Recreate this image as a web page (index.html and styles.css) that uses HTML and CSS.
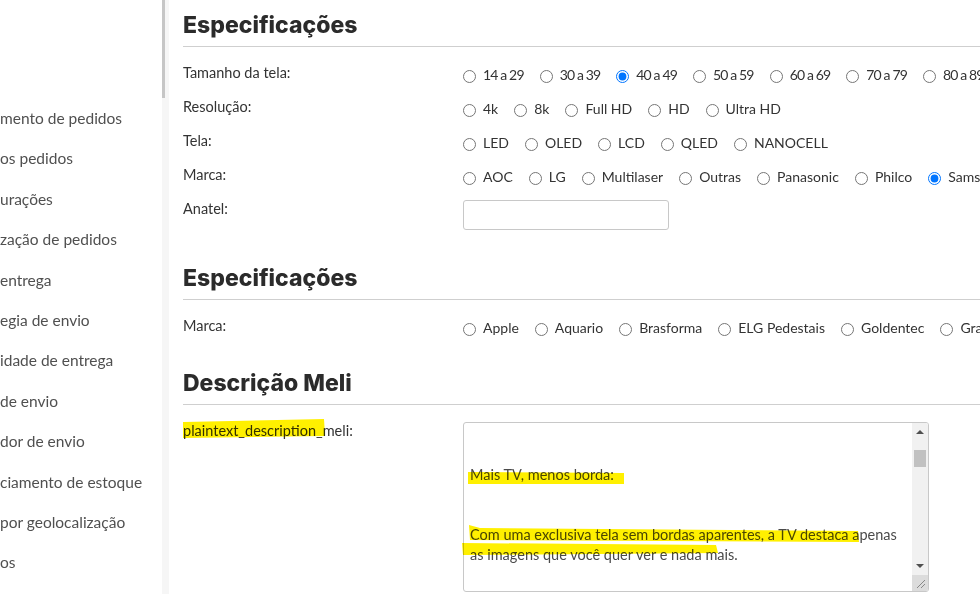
FILE: index.html
```html
<!DOCTYPE html>
<html lang="pt-BR">
<head>
<meta charset="utf-8">
<title>Especificações</title>
<link rel="stylesheet" href="styles.css">
</head>
<body>
<div class="page">
  <aside class="sidebar">
    <ul class="menu">
      <li>mento de pedidos</li>
      <li>os pedidos</li>
      <li>urações</li>
      <li>zação de pedidos</li>
      <li>entrega</li>
      <li>egia de envio</li>
      <li>idade de entrega</li>
      <li>de envio</li>
      <li>dor de envio</li>
      <li>ciamento de estoque</li>
      <li>por geolocalização</li>
      <li>os</li>
    </ul>
  </aside>
  <div class="side-scroll"><div class="side-thumb"></div></div>

  <main class="main">
    <h2 class="section-title">Especificações</h2>
    <div class="row">
      <div class="label">Tamanho da tela:</div>
      <div class="options options-num">
        <label class="opt"><input type="radio" name="t">14 a 29</label>
        <label class="opt"><input type="radio" name="t">30 a 39</label>
        <label class="opt"><input type="radio" name="t" checked>40 a 49</label>
        <label class="opt"><input type="radio" name="t">50 a 59</label>
        <label class="opt"><input type="radio" name="t">60 a 69</label>
        <label class="opt"><input type="radio" name="t">70 a 79</label>
        <label class="opt"><input type="radio" name="t">80 a 89</label>
      </div>
    </div>
    <div class="row">
      <div class="label">Resolução:</div>
      <div class="options">
        <label class="opt"><input type="radio" name="r">4k</label>
        <label class="opt"><input type="radio" name="r">8k</label>
        <label class="opt"><input type="radio" name="r">Full HD</label>
        <label class="opt"><input type="radio" name="r">HD</label>
        <label class="opt"><input type="radio" name="r">Ultra HD</label>
      </div>
    </div>
    <div class="row">
      <div class="label">Tela:</div>
      <div class="options">
        <label class="opt"><input type="radio" name="l">LED</label>
        <label class="opt"><input type="radio" name="l">OLED</label>
        <label class="opt"><input type="radio" name="l">LCD</label>
        <label class="opt"><input type="radio" name="l">QLED</label>
        <label class="opt"><input type="radio" name="l">NANOCELL</label>
      </div>
    </div>
    <div class="row">
      <div class="label">Marca:</div>
      <div class="options">
        <label class="opt"><input type="radio" name="m">AOC</label>
        <label class="opt"><input type="radio" name="m">LG</label>
        <label class="opt"><input type="radio" name="m">Multilaser</label>
        <label class="opt"><input type="radio" name="m">Outras</label>
        <label class="opt"><input type="radio" name="m">Panasonic</label>
        <label class="opt"><input type="radio" name="m">Philco</label>
        <label class="opt"><input type="radio" name="m" checked>Samsung</label>
      </div>
    </div>
    <div class="row row-input">
      <div class="label">Anatel:</div>
      <div class="field"><input class="text-input" type="text"></div>
    </div>

    <h2 class="section-title section-2">Especificações</h2>
    <div class="row">
      <div class="label">Marca:</div>
      <div class="options">
        <label class="opt"><input type="radio" name="m2">Apple</label>
        <label class="opt"><input type="radio" name="m2">Aquario</label>
        <label class="opt"><input type="radio" name="m2">Brasforma</label>
        <label class="opt"><input type="radio" name="m2">ELG Pedestais</label>
        <label class="opt"><input type="radio" name="m2">Goldentec</label>
        <label class="opt"><input type="radio" name="m2">Gradiente</label>
      </div>
    </div>

    <h2 class="section-title section-3">Descrição Meli</h2>
    <div class="row row-text">
      <div class="label">plaintext_description_meli:</div>
      <div class="textarea">
        <div class="textarea-content">
          <p class="blank">&nbsp;</p>
          <p class="blank">&nbsp;</p>
          <p>Mais TV, menos borda:</p>
          <p class="blank">&nbsp;</p>
          <p class="blank">&nbsp;</p>
          <p>Com uma exclusiva tela sem bordas aparentes, a TV destaca apenas as imagens que você quer ver e nada mais.</p>
        </div>
        <div class="ta-scroll">
          <div class="ta-arrow up"></div>
          <div class="ta-track"><div class="ta-thumb"></div></div>
          <div class="ta-arrow down"></div>
          <div class="ta-resize">
            <svg width="15" height="15" viewBox="0 0 15 15"><path d="M13 5 L5 13 M13 9 L9 13" stroke="#888" stroke-width="1"/></svg>
          </div>
        </div>
      </div>
    </div>
  </main>
</div>

<svg class="marker" width="980" height="594" viewBox="0 0 980 594">
  <polygon points="183,422 324,419 325,436 183,438" />
  <polygon points="468,472 624,473 624,484 468,484" />
  <polygon points="469,525 480,528 858,531 859,542 470,540" />
  <polygon points="462,543 716,545 718,553 463,555" />
</svg>
</body>
</html>
```

FILE: styles.css
```css
* { box-sizing: border-box; }
html, body {
  margin: 0;
  padding: 0;
  background: #fff;
  width: 980px;
  height: 594px;
  overflow: hidden;
}
body {
  font-family: Lato, "Liberation Sans", sans-serif;
  color: #333;
  position: relative;
}
.page {
  display: flex;
  height: 594px;
}
.sidebar {
  width: 162px;
  flex: none;
  overflow: hidden;
}
.menu {
  list-style: none;
  margin: 0;
  padding: 98px 0 0 0;
}
.menu li {
  height: 40.4px;
  line-height: 40.4px;
  font-size: 15.5px;
  color: #505050;
  white-space: nowrap;
}
.side-scroll {
  width: 7px;
  flex: none;
  background: #f6f6f6;
  height: 594px;
}
.side-thumb {
  width: 3px;
  height: 98px;
  background: #c6c6c6;
}
.main {
  flex: 1;
  padding-left: 14px;
  overflow: hidden;
  white-space: nowrap;
}
.section-title {
  margin: 0;
  padding: 10px 0 6px 0;
  line-height: 30px;
  height: 47px;
  font-family: Inter, Lato, sans-serif;
  font-size: 23px;
  font-weight: 800;
  color: #2b2b2b;
  border-bottom: 1px solid #cfcfcf;
  letter-spacing: 0;
}
.section-title + .row { margin-top: 9px; }
.section-2 { margin-top: 23px; }
.section-3 { margin-top: 15px; }
.row {
  display: flex;
  align-items: flex-start;
  height: 34px;
}
.label {
  width: 280px;
  flex: none;
  line-height: 34px;
  font-size: 14.5px;
  color: #333;
}
.options {
  display: flex;
  align-items: center;
  height: 34px;
  padding-top: 3px;
  font-size: 14px;
  color: #333;
}
.options-num .opt {
  letter-spacing: -0.85px;
}
.opt {
  display: flex;
  align-items: center;
  margin-right: 16px;
}
.opt input {
  width: 13px;
  height: 13px;
  margin: 3px 7px 0 0;
  flex: none;
}
.row-input {
  height: 38px;
}
.field {
  padding-top: 8px;
}
.text-input {
  width: 206px;
  height: 30px;
  border: 1px solid #c8c8c8;
  border-radius: 3px;
  background: #fff;
  margin: 0;
  display: block;
}
.row-text {
  height: 180px;
}
.textarea {
  margin-top: 8px;
  width: 466px;
  height: 170px;
  border: 1px solid #c8c8c8;
  border-radius: 3px;
  display: flex;
  overflow: hidden;
  white-space: normal;
}
.textarea-content {
  flex: 1;
  padding: 2px 8px 0 6px;
  font-size: 14.5px;
  line-height: 20px;
  color: #4a4a4a;
}
.textarea-content p {
  margin: 0;
}
.ta-scroll {
  width: 16px;
  flex: none;
  background: #f1f1f1;
  display: flex;
  flex-direction: column;
}
.ta-arrow {
  height: 17px;
  flex: none;
  position: relative;
}
.ta-arrow::after {
  content: "";
  position: absolute;
  left: 4px;
  width: 0;
  height: 0;
  border-left: 4px solid transparent;
  border-right: 4px solid transparent;
}
.ta-arrow.up::after {
  top: 7px;
  border-bottom: 4px solid #505050;
}
.ta-arrow.down::after {
  top: 6px;
  border-top: 4px solid #505050;
}
.ta-track {
  flex: 1;
  padding: 10px 2px 0 2px;
}
.ta-thumb {
  height: 17px;
  background: #c1c1c1;
}
.ta-resize {
  height: 16px;
  flex: none;
  background: #dcdcdc;
}
.ta-resize svg { display: block; }
.marker {
  position: absolute;
  left: 0;
  top: 0;
  pointer-events: none;
  mix-blend-mode: multiply;
}
.marker polygon {
  fill: #fff000;
}
```
